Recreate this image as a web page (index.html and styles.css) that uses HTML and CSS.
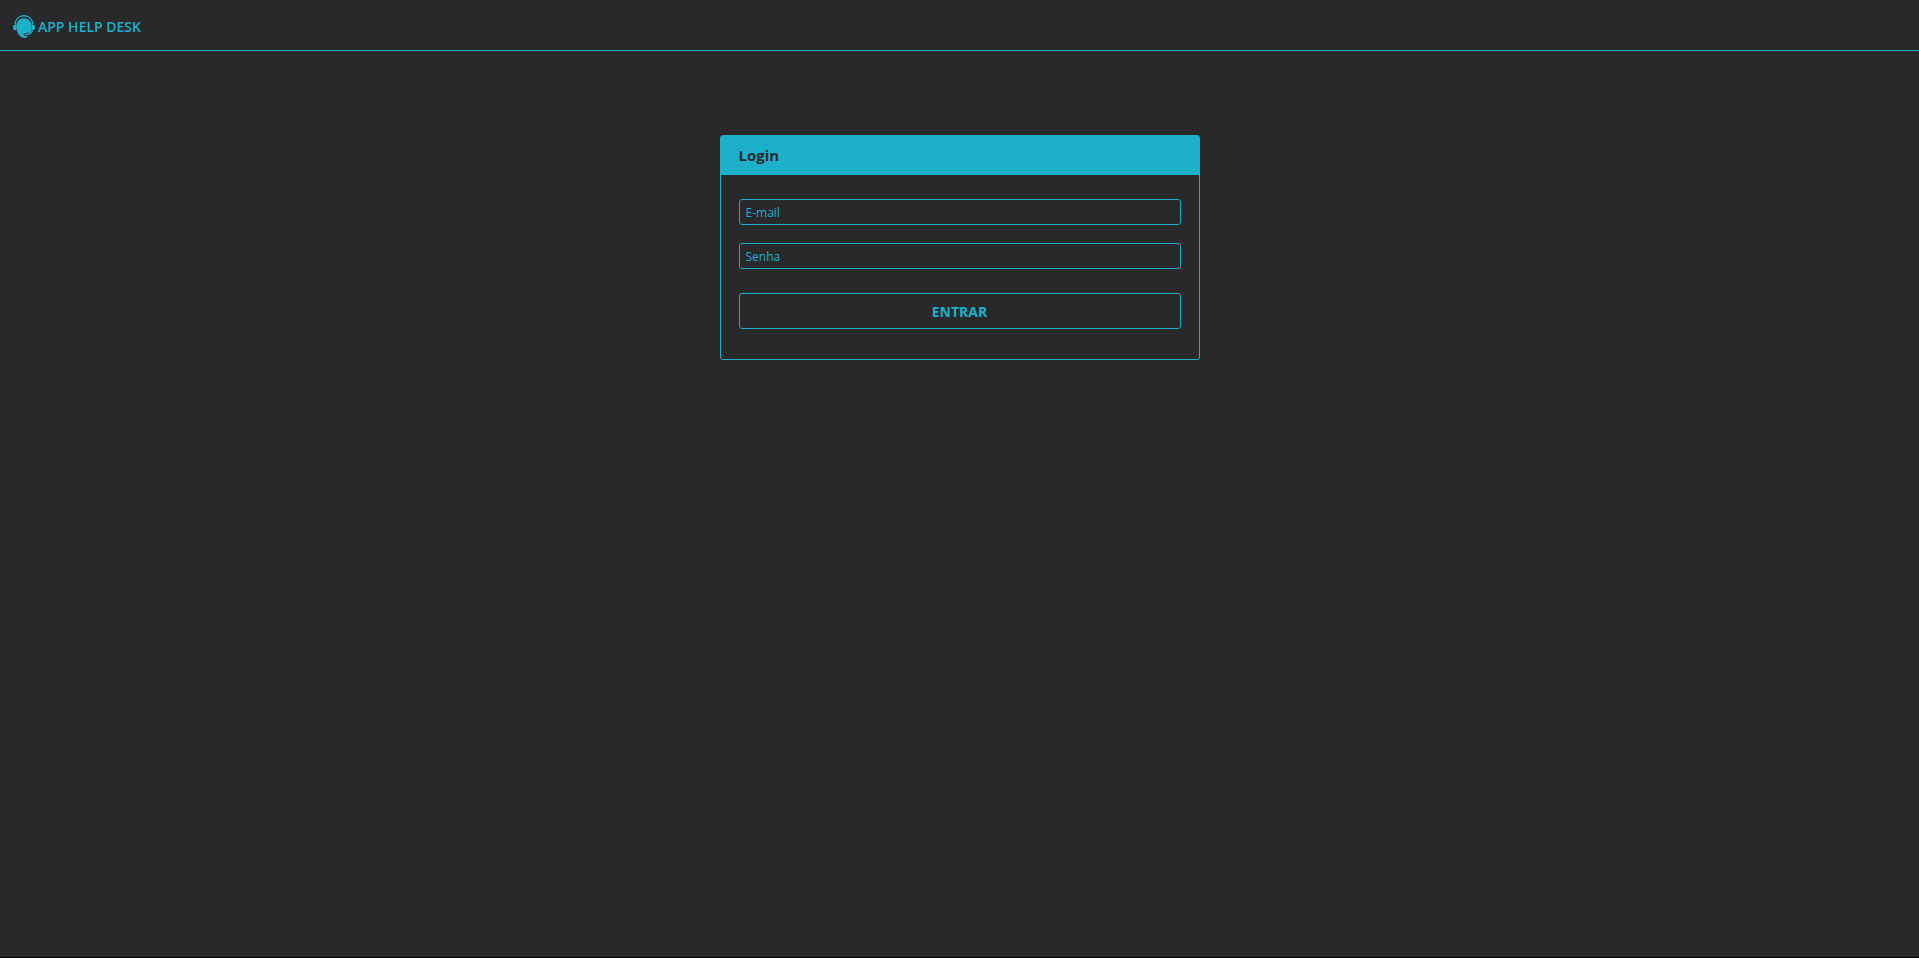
FILE: index.html
```html
<!DOCTYPE html>
<html lang="pt-BR">
<head>
    <meta charset="UTF-8">
    <meta name="viewport" content="width=device-width, initial-scale=1.0">
    <title>App Help Desk</title>
    <link rel="stylesheet" href="styles.css">
</head>
<body>
    <header class="navbar">
        <a class="brand" href="#">
            <svg class="brand-icon" viewBox="0 0 22 23" aria-hidden="true">
                <path class="band" d="M2 9.500C2.500 4.300 6 .800 11 .800s8.500 3.500 9 8.700"/>
                <path class="fill" d="M3.500 9.500C0.800 9.500 0 10.700 0 12.500S0.800 15.500 3.500 15.500zM18.500 9.500c2.700 0 3.500 1.200 3.500 3S21.200 15.500 18.500 15.500z"/>
                <path class="fill" d="M11 3.200c4.400 0 7.600 3.100 7.600 7.800 0 2.500-.3 4.600-1.200 6.200-1.200.6-2.300.8-4 .8-2.200 0-2.800.5-2.800 1.500s1.200 1.500 3 1.500h1.500c-1 1.200-2.300 2-4 2-2.600 0-5-2.400-6.300-5C3.900 16 3.400 13.500 3.400 11c0-4.700 3.200-7.800 7.600-7.800z"/>
                <path class="arm" d="M19.500 15.500c-1 2.800-3.500 4.200-7.500 4.200"/>
            </svg>
            <span>APP HELP DESK</span>
        </a>
    </header>

    <main class="container">
        <section class="card">
            <h1 class="card-header">Login</h1>
            <form class="card-body">
                <input type="email" name="email" placeholder="E-mail" aria-label="E-mail">
                <input type="password" name="senha" placeholder="Senha" aria-label="Senha">
                <button type="submit">ENTRAR</button>
            </form>
        </section>
    </main>
</body>
</html>
```

FILE: styles.css
```css
* {
    margin: 0;
    padding: 0;
    box-sizing: border-box;
}

body {
    min-height: 100vh;
    background-color: #29292b;
    border-bottom: 1px solid #000;
    font-family: "Open Sans", "Noto Sans", sans-serif;
    color: #1cb0ca;
}

.navbar {
    display: flex;
    align-items: center;
    height: 51px;
    padding: 2px 13px 0;
    border-bottom: 1px solid #1cb0ca;
}

.brand {
    display: flex;
    align-items: center;
    gap: 3px;
    color: #1cb0ca;
    font-size: 14px;
    font-weight: 600;
    text-decoration: none;
}

.brand-icon {
    width: 22px;
    height: 23px;
}

.brand-icon .fill {
    fill: #1cb0ca;
}

.brand-icon .band,
.brand-icon .arm {
    fill: none;
    stroke: #1cb0ca;
    stroke-width: 1.4;
}

.container {
    padding: 84px 16px 0;
}

.card {
    width: 100%;
    max-width: 480px;
    margin: 0 auto;
    border: 1px solid #1cb0ca;
    border-radius: 3px;
}

.card-header {
    padding: 0 18px;
    background-color: #1cb0ca;
    color: #29292b;
    font-size: 15px;
    font-weight: 700;
    line-height: 39px;
}

.card-body {
    display: flex;
    flex-direction: column;
    gap: 18px;
    padding: 24px 18px 30px;
}

.card-body input {
    width: 100%;
    height: 26px;
    padding: 0 6px;
    background-color: transparent;
    border: 1px solid #1cb0ca;
    border-radius: 3px;
    color: #1cb0ca;
    font-family: inherit;
    font-size: 12px;
    outline: none;
}

.card-body input::placeholder {
    color: #1cb0ca;
    opacity: 1;
}

.card-body button {
    height: 36px;
    margin-top: 6px;
    background-color: transparent;
    border: 1px solid #1cb0ca;
    border-radius: 3px;
    color: #1cb0ca;
    font-family: inherit;
    font-size: 14px;
    font-weight: 700;
    cursor: pointer;
}

.card-body button:hover {
    background-color: #1cb0ca;
    color: #29292b;
}
```
